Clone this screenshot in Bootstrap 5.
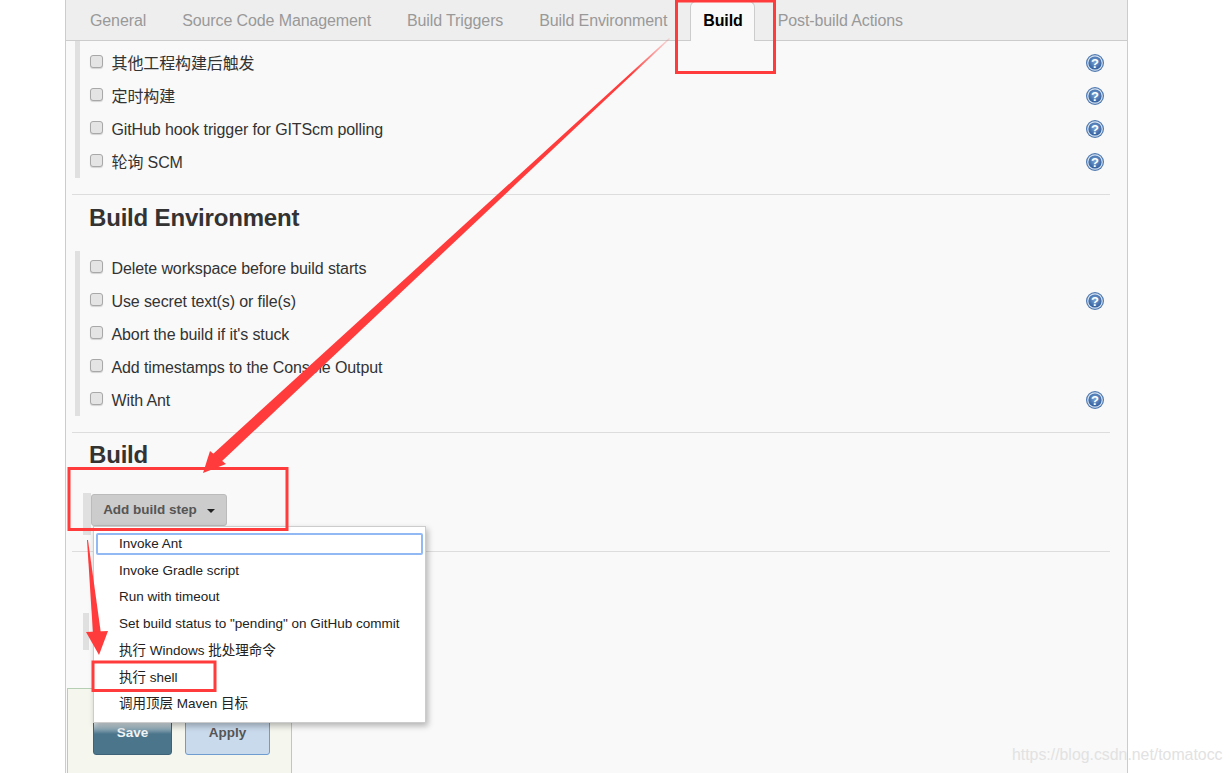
<!DOCTYPE html>
<html lang="zh">
<head>
<meta charset="utf-8">
<title>Jenkins job configuration</title>
<link href="https://cdn.jsdelivr.net/npm/bootstrap@5.3.0/dist/css/bootstrap.min.css" rel="stylesheet">
<style>
html,body{height:773px;overflow:hidden;background:#fff}
body{font-family:"Liberation Sans","Noto Sans CJK SC",sans-serif;font-size:16px;color:#333;position:relative}
.cfg-panel{margin-left:65px;width:1063px;height:773px;background:#f9f9f9;border-left:1px solid #ccc;border-right:1px solid #ccc;overflow:hidden}
.cfg-tabs{height:41px;background:#eee;border-bottom:1px solid #ccc;padding-left:6px;flex-wrap:nowrap}
.cfg-tabs .nav-link{color:#999;font-size:16px;letter-spacing:-.11px;line-height:41px;padding:0 18px;border:0;border-radius:0;background:none}
.cfg-tabs .tab-now{margin:1px 5px 0 5px;padding:0 11px 0 12px;height:40px;line-height:37px;color:#000;font-weight:700;background:#f9f9f9;border:1px solid #ccc;border-bottom:0;border-radius:6px 6px 0 0}
.cfg-tabs .tab-after{padding-left:18px}
.cfg-body{padding:0 17px 0 6px}
.opt-group{margin-left:3px;border-left:5px solid #e0e0e0;padding-right:6px}
.opt-first{padding-top:5px}
.opt-row{height:33px;padding:2px 0 0 10px;color:#333;line-height:31px;letter-spacing:-.11px}
.opt-row .form-check-input{width:13px;height:13px;margin:0 8.5px 0 0;flex:none;background-color:#e4e4e4;border:1px solid #a8a8a8;border-radius:3px;position:relative;top:-2px;box-shadow:0 1px 1px rgba(0,0,0,.15)}
.opt-label{flex:1}
.help-mark{position:relative;top:-1px}
.cfg-rule{margin:16px 0 0;border:0;border-top:1px solid #ddd;opacity:1}
.cfg-head{font-size:24px;letter-spacing:-.18px;font-weight:700;color:#333;line-height:46px;height:56px;margin:0;padding-left:17px}
.cfg-head-b{height:60px;line-height:44px}
.step-wrap{margin-left:11px;border-left:8px solid #e0e0e0;height:42px;position:relative;padding-top:1px}
.step-btn{width:136px;height:32px;padding:0;background:#ccc;color:#555;font-size:13.5px;font-weight:700;border:1px solid #bbb;border-radius:3px;display:flex;align-items:center;justify-content:center;gap:10px}
.step-btn:hover{background:#ccc;color:#555}
.step-caret{width:0;height:0;border-left:4px solid transparent;border-right:4px solid transparent;border-top:4px solid #222;margin-top:2px}
.step-menu{position:absolute;left:2px;top:33px;width:333px;height:197px;padding:6px 2px 5px;margin:0;border:1px solid #ccc;border-radius:0;box-shadow:2px 3px 6px rgba(0,0,0,.28);z-index:5;background:#fff}
.step-menu .dropdown-item{height:26.8px;line-height:21px;padding:2px 21px;font-size:13.5px;color:#222;border:2px solid transparent;border-radius:2px;background:none}
.step-menu .item-focus{height:22px;line-height:18px;padding-top:0;padding-bottom:0;border-color:#93b9f5;margin-bottom:.5px}
.post-bar{margin:61px 0 0 11px;width:6px;height:37px;background:#e0e0e0}
.save-bar{margin:38px 0 0 -5px;width:225px;height:120px;background:#f5f7ef;border:1px solid #b4cfb4;border-bottom:0;padding:23px 0 0 25px;gap:13px}
.save-btn{width:79px;height:43px;padding:0;font-size:13.5px;font-weight:700;border-radius:3px}
.save-primary{background:linear-gradient(#dfe8ec 10px,#4b758b 21px);border:1px solid #3e6378;color:#eef3f5}
.save-apply{width:85px;background:#c9daec;border:1px solid #6f9cd0;color:#555}
.help-mark{width:18px;height:18px;flex:none;display:block}
.mark-layer{position:absolute;left:0;top:0;z-index:10;pointer-events:none}
.wm-text{position:absolute;left:1012px;top:745px;z-index:11;font-size:15.85px;color:#e2e2e2;line-height:20px;white-space:nowrap}
</style>
</head>
<body>
<svg width="0" height="0" class="position-absolute">
  <defs>
    <radialGradient id="hb" cx="50%" cy="40%" r="60%"><stop offset="0" stop-color="#7da6d6"/><stop offset="1" stop-color="#2f5d9e"/></radialGradient>
    <symbol id="help" viewBox="0 0 18 18">
      <circle cx="9" cy="9" r="9" fill="#4f79b0"/>
      <circle cx="9" cy="9" r="7.8" fill="#d5e2f0"/>
      <circle cx="9" cy="9" r="6.6" fill="url(#hb)"/>
      <text x="9" y="13.6" text-anchor="middle" font-family="Liberation Sans" font-weight="700" font-size="13" fill="#fff">?</text>
    </symbol>
  </defs>
</svg>

<div class="cfg-panel">
  <ul class="nav cfg-tabs">
    <li class="nav-item"><a class="nav-link" href="#">General</a></li>
    <li class="nav-item"><a class="nav-link" href="#">Source Code Management</a></li>
    <li class="nav-item"><a class="nav-link" href="#">Build Triggers</a></li>
    <li class="nav-item"><a class="nav-link" href="#">Build Environment</a></li>
    <li class="nav-item"><a class="nav-link tab-now" href="#">Build</a></li>
    <li class="nav-item"><a class="nav-link tab-after" href="#">Post-build Actions</a></li>
  </ul>

  <div class="cfg-body">
    <div class="opt-group opt-first">
      <div class="opt-row d-flex align-items-center"><input class="form-check-input" type="checkbox"><span class="opt-label">其他工程构建后触发</span><svg class="help-mark"><use href="#help"/></svg></div>
      <div class="opt-row d-flex align-items-center"><input class="form-check-input" type="checkbox"><span class="opt-label">定时构建</span><svg class="help-mark"><use href="#help"/></svg></div>
      <div class="opt-row d-flex align-items-center"><input class="form-check-input" type="checkbox"><span class="opt-label">GitHub hook trigger for GITScm polling</span><svg class="help-mark"><use href="#help"/></svg></div>
      <div class="opt-row d-flex align-items-center"><input class="form-check-input" type="checkbox"><span class="opt-label">轮询 SCM</span><svg class="help-mark"><use href="#help"/></svg></div>
    </div>
    <hr class="cfg-rule">
    <h2 class="cfg-head">Build Environment</h2>
    <div class="opt-group">
      <div class="opt-row d-flex align-items-center"><input class="form-check-input" type="checkbox"><span class="opt-label">Delete workspace before build starts</span></div>
      <div class="opt-row d-flex align-items-center"><input class="form-check-input" type="checkbox"><span class="opt-label">Use secret text(s) or file(s)</span><svg class="help-mark"><use href="#help"/></svg></div>
      <div class="opt-row d-flex align-items-center"><input class="form-check-input" type="checkbox"><span class="opt-label">Abort the build if it's stuck</span></div>
      <div class="opt-row d-flex align-items-center"><input class="form-check-input" type="checkbox"><span class="opt-label">Add timestamps to the Console Output</span></div>
      <div class="opt-row d-flex align-items-center"><input class="form-check-input" type="checkbox"><span class="opt-label">With Ant</span><svg class="help-mark"><use href="#help"/></svg></div>
    </div>
    <hr class="cfg-rule">
    <h2 class="cfg-head cfg-head-b">Build</h2>
    <div class="step-wrap">
      <button type="button" class="btn step-btn">Add build step <span class="step-caret"></span></button>
      <ul class="dropdown-menu d-block step-menu list-unstyled">
        <li><a class="dropdown-item item-focus" href="#">Invoke Ant</a></li>
        <li><a class="dropdown-item" href="#">Invoke Gradle script</a></li>
        <li><a class="dropdown-item" href="#">Run with timeout</a></li>
        <li><a class="dropdown-item" href="#">Set build status to "pending" on GitHub commit</a></li>
        <li><a class="dropdown-item" href="#">执行 Windows 批处理命令</a></li>
        <li><a class="dropdown-item" href="#">执行 shell</a></li>
        <li><a class="dropdown-item" href="#">调用顶层 Maven 目标</a></li>
      </ul>
    </div>
    <hr class="cfg-rule">
    <div class="post-bar"></div>
    <div class="save-bar d-flex align-items-start">
      <button type="button" class="btn save-btn save-primary">Save</button>
      <button type="button" class="btn save-btn save-apply">Apply</button>
    </div>
  </div>
</div>

<svg class="mark-layer" width="1230" height="773" viewBox="0 0 1230 773">
  <defs>
    <linearGradient id="fadeA" gradientUnits="userSpaceOnUse" x1="669" y1="38" x2="630" y2="74"><stop offset="0" stop-color="#ff3b3b" stop-opacity=".15"/><stop offset="1" stop-color="#ff3b3b"/></linearGradient>
  </defs>
  <g fill="none" stroke="#ff3b3b" stroke-width="3">
    <rect x="676.5" y="1" width="98" height="71.5"/>
    <rect x="69" y="468.5" width="218" height="61"/>
    <rect x="93" y="662" width="122" height="28.5"/>
  </g>
  <polygon fill="url(#fadeA)" points="669,38 670,39 221,462 213,454"/>
  <polygon fill="#ff3b3b" points="203,473 210,451 226,464"/>
  <polygon fill="#ff3b3b" points="87,540 88,540 101,634 93,634"/>
  <polygon fill="#ff3b3b" points="99,655 86,632 108,631"/>
</svg>
<div class="wm-text">https://blog.csdn.net/tomatocc</div>
<script src="https://cdn.jsdelivr.net/npm/bootstrap@5.3.0/dist/js/bootstrap.bundle.min.js"></script>
</body>
</html>
